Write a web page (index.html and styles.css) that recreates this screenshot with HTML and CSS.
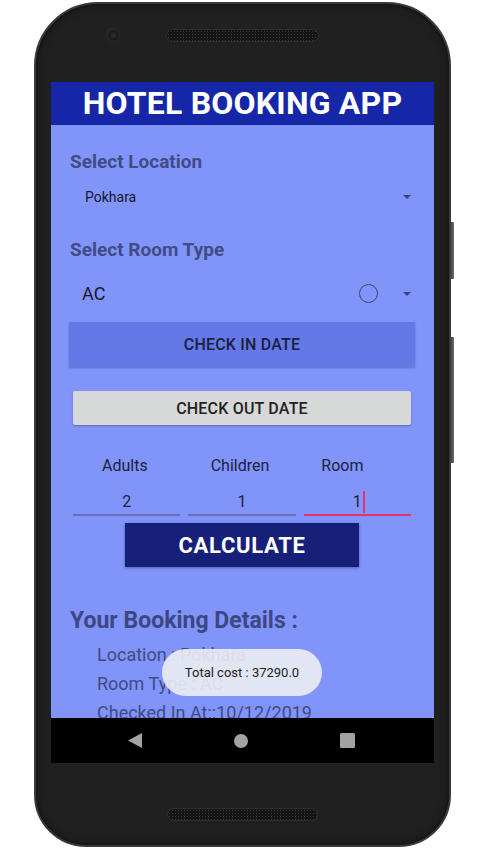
FILE: index.html
```html
<!DOCTYPE html>
<html lang="en">
<head>
<meta charset="utf-8">
<title>Hotel Booking App</title>
<link rel="stylesheet" href="styles.css">
</head>
<body>
<div class="phone">
  <div class="side-btn side-btn-power"></div>
  <div class="side-btn side-btn-volume"></div>
  <div class="phone-top">
    <div class="camera"></div>
    <div class="speaker"></div>
  </div>
  <div class="screen">
    <div class="title-bar">HOTEL BOOKING APP</div>
    <div class="content">
      <div class="label">Select Location</div>
      <div class="spinner spinner-location">
        <span class="spinner-text">Pokhara</span>
        <span class="caret"></span>
      </div>
      <div class="label label-room">Select Room Type</div>
      <div class="spinner spinner-room">
        <span class="spinner-text spinner-text-lg">AC</span>
        <span class="radio"></span>
        <span class="caret"></span>
      </div>
      <div class="btn btn-checkin">CHECK IN DATE</div>
      <div class="btn btn-checkout">CHECK OUT DATE</div>
      <div class="counts-labels">
        <span class="count-label count-adults">Adults</span>
        <span class="count-label count-children">Children</span>
        <span class="count-label count-room">Room</span>
      </div>
      <div class="counts-inputs">
        <div class="field">2</div>
        <div class="field">1</div>
        <div class="field field-focus">1<span class="cursor"></span></div>
      </div>
      <div class="btn-calc">CALCULATE</div>
      <div class="details-title">Your Booking Details :</div>
      <div class="details">
        <div class="detail">Location : Pokhara</div>
        <div class="detail">Room Type : AC</div>
        <div class="detail">Checked In At::10/12/2019</div>
      </div>
    </div>
    <div class="navbar">
      <svg class="nav-icon" width="14" height="15" viewBox="0 0 14 15"><polygon points="14,0 14,15 0,7.5" fill="#a3a3a3"/></svg>
      <span class="nav-home"></span>
      <span class="nav-recent"></span>
    </div>
    <div class="toast">Total cost : 37290.0</div>
  </div>
  <div class="phone-bottom">
    <div class="speaker speaker-bottom"></div>
  </div>
</div>
</body>
</html>
```
FILE: styles.css
```css
* { box-sizing: border-box; }
html, body { margin: 0; background: #ffffff; }
body {
  padding: 2px 0 0 34px;
  font-family: Roboto, "Noto Sans", sans-serif;
}
.phone {
  position: relative;
  width: 417px;
  height: 845px;
  background: #202020;
  border: 2px solid #3a3a3a;
  border-radius: 64px 64px 52px 52px;
  box-shadow: inset 0 0 0 1px #151515, inset 0 0 8px rgba(0,0,0,0.5);
  display: flex;
  flex-direction: column;
}
.side-btn {
  position: absolute;
  right: -5px;
  width: 3px;
  background: linear-gradient(to right, #4a4a4a, #6a6a6a);
  border-radius: 0 1px 1px 0;
}
.side-btn-power { top: 218px; height: 57px; }
.side-btn-volume { top: 333px; height: 126px; }
.phone-top {
  height: 78px;
  padding: 25px 0 0 71px;
  display: flex;
  align-items: flex-start;
  gap: 47px;
}
.camera {
  width: 12px;
  height: 12px;
  border-radius: 50%;
  background: radial-gradient(circle at 55% 55%, #3a2a3a 0, #1a1a1e 45%, #262626 70%, #2e2e2e 100%);
  box-shadow: 0 0 0 1px #2a2a2a;
}
.speaker {
  width: 153px;
  height: 13px;
  border-radius: 7px;
  background-color: #141414;
  background-image: radial-gradient(circle, #3a3a3a 0.7px, transparent 1px);
  background-size: 3px 3px;
  border: 1px solid #2e2e2e;
}
.screen {
  position: relative;
  margin-left: 15px;
  width: 383px;
  height: 681px;
  display: flex;
  flex-direction: column;
  overflow: hidden;
}
.title-bar {
  height: 43px;
  background: #1527a7;
  color: #ffffff;
  font-weight: 700;
  font-size: 32px;
  line-height: 43px;
  text-align: center;
  letter-spacing: 0.2px;
}
.content {
  flex: 1;
  background: #8194fa;
  padding: 0 19px 0 18px;
  overflow: hidden;
}
.label {
  margin-top: 26px;
  height: 22px;
  line-height: 22px;
  font-size: 19px;
  font-weight: 700;
  color: #414b85;
  padding-left: 1px;
}
.label-room { margin-top: 18px; }
.spinner {
  display: flex;
  align-items: center;
  height: 48px;
  padding-left: 16px;
  padding-right: 4px;
}
.spinner-room {
  margin-top: 4px;
  height: 57px;
  padding-left: 13px;
}
.spinner-text {
  flex: 1;
  font-size: 14px;
  color: rgba(0,0,0,0.87);
}
.spinner-text-lg { font-size: 18px; }
.caret {
  width: 0;
  height: 0;
  border-left: 4.5px solid transparent;
  border-right: 4.5px solid transparent;
  border-top: 4px solid #3d4572;
}
.radio {
  width: 19px;
  height: 19px;
  border: 1.8px solid #3a4270;
  border-radius: 50%;
  margin-right: 25px;
}
.btn {
  display: flex;
  align-items: center;
  justify-content: center;
  font-weight: 500;
  font-size: 16px;
  letter-spacing: 0.2px;
}
.btn-checkin {
  height: 45px;
  background: #6478e6;
  color: #1b1f3e;
  box-shadow: 0 1px 2px rgba(0,0,0,0.25);
}
.btn-checkout {
  margin: 24px 4px 0;
  height: 34px;
  background: #d7d8d8;
  color: #222222;
  border-radius: 2px;
  box-shadow: 0 1px 2px rgba(0,0,0,0.3);
}
.counts-labels {
  margin-top: 30px;
  height: 22px;
  line-height: 22px;
  display: flex;
  font-size: 16px;
  color: #1c2140;
}
.count-adults { margin-left: 33px; }
.count-children { margin-left: 63px; }
.count-room { margin-left: 52px; }
.counts-inputs {
  margin: 10px 4px 0;
  display: grid;
  grid-template-columns: repeat(3, 1fr);
  gap: 8px;
}
.field {
  padding-top: 3px;
  height: 29px;
  line-height: 24px;
  text-align: center;
  font-size: 16px;
  color: #1c2140;
  border-bottom: 2px solid #6670b4;
  display: flex;
  justify-content: center;
  align-items: center;
}
.field-focus { border-bottom-color: #e2336e; padding-left: 3px; }
.cursor {
  width: 2px;
  height: 22px;
  background: #e2336e;
  margin-left: 1px;
}
.btn-calc {
  margin: 7px auto 0;
  width: 234px;
  height: 44px;
  background: #162079;
  color: #ffffff;
  font-weight: 700;
  font-size: 22px;
  display: flex;
  align-items: center;
  justify-content: center;
  box-shadow: 0 1px 3px rgba(0,0,0,0.35);
  letter-spacing: 0.7px;
}
.details-title {
  margin-top: 40px;
  height: 28px;
  line-height: 28px;
  font-size: 23px;
  font-weight: 700;
  color: #3d4783;
  padding-left: 1px;
}
.details {
  margin-top: 5px;
  padding-left: 28px;
}
.detail {
  height: 29px;
  line-height: 29px;
  font-size: 18px;
  color: #404a85;
  white-space: nowrap;
}
.navbar {
  height: 45px;
  background: #000000;
  display: flex;
  align-items: center;
  justify-content: center;
  gap: 92px;
  padding-right: 2px;
}
.nav-icon { display: block; }
.nav-home {
  width: 14px;
  height: 14px;
  border-radius: 50%;
  background: #a3a3a3;
}
.nav-recent {
  width: 15px;
  height: 15px;
  border-radius: 1.5px;
  background: #a3a3a3;
}
.toast {
  position: absolute;
  left: 111px;
  top: 567px;
  width: 160px;
  height: 47px;
  border-radius: 24px;
  background: rgba(236,237,243,0.9);
  color: #222222;
  font-size: 13px;
  display: flex;
  align-items: center;
  justify-content: center;
}
.phone-bottom {
  flex: 1;
  display: flex;
  justify-content: center;
  padding-top: 45px;
}
.speaker-bottom { width: 151px; }
```
